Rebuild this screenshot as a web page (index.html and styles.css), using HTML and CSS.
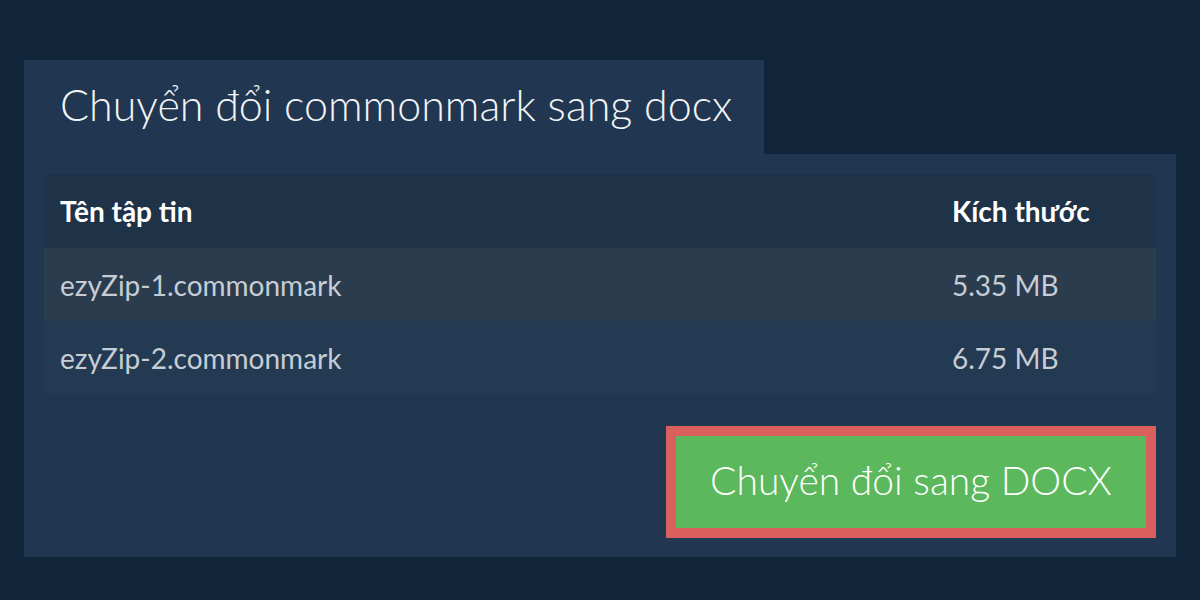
FILE: index.html
```html
<!DOCTYPE html>
<html lang="vi">
<head>
<meta charset="utf-8">
<title>Chuyển đổi commonmark sang docx</title>
<link rel="stylesheet" href="styles.css">
</head>
<body>
<div class="page">
  <div class="tab"><h1 class="title">Chuyển đổi commonmark sang docx</h1></div>
  <div class="panel">
    <div class="table">
      <div class="row head"><div class="cell">Tên tập tin</div><div class="cell">Kích thước</div></div>
      <div class="row odd"><div class="cell">ezyZip-1.commonmark</div><div class="cell">5.35 MB</div></div>
      <div class="row even"><div class="cell">ezyZip-2.commonmark</div><div class="cell">6.75 MB</div></div>
    </div>
    <div class="actions"><button class="convert">Chuyển đổi sang DOCX</button></div>
  </div>
</div>
</body>
</html>
```
FILE: styles.css
```css
html, body { margin: 0; padding: 0; }
body {
  background: #10243a;
  font-family: Lato, "Noto Sans", sans-serif;
  width: 1200px;
  height: 600px;
  overflow: hidden;
}
.page { padding: 60px 24px 0 24px; }
.tab {
  width: 740px;
  height: 94px;
  background: #213650;
  box-sizing: border-box;
  padding-left: 36px;
  display: flex;
  align-items: center;
}
.title {
  margin: 0;
  font-weight: 300;
  font-size: 43px;
  color: #f2f4f6;
  line-height: 1;
  padding-bottom: 6px;
  white-space: nowrap;
}
.panel {
  width: 1152px;
  background: #213650;
  box-sizing: border-box;
  padding: 20px 20px 19px 20px;
}
.table { display: flex; flex-direction: column; }
.row {
  display: grid;
  grid-template-columns: 1fr 204px;
  align-items: center;
  padding-left: 16px;
  white-space: nowrap;
}
.row.head { height: 74px; background: #1e3248; color: #ffffff; font-weight: 700; font-size: 28px; }
.row.odd { height: 73px; background: #2b3c4e; }
.row.even { height: 73px; background: #243a52; }
.row.odd, .row.even { color: #c6cdd5; font-size: 28px; }
.actions { display: flex; justify-content: flex-end; padding-top: 32px; }
.convert {
  width: 490px;
  height: 112px;
  border: 10px solid #d9605c;
  background: #5cb85c;
  color: #ffffff;
  font-family: Lato, "Noto Sans", sans-serif;
  font-weight: 300;
  font-size: 39px;
  padding: 0;
  padding-bottom: 4px;
  white-space: nowrap;
}
```
